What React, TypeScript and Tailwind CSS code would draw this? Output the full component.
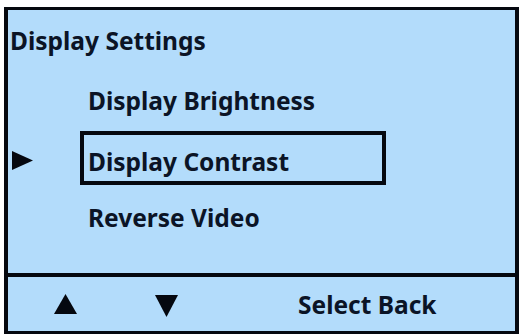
import React from "react";

const font = { fontFamily: "'Noto Sans', Lato, sans-serif" };

const Tri = ({ dir, className }: { dir: "up" | "down" | "right"; className?: string }) => {
  const pts =
    dir === "up" ? "11.5,0 23,20 0,20" : dir === "down" ? "0,0 23,0 11.5,22" : "0,0 21,9.5 0,19";
  const w = dir === "right" ? 21 : 23;
  const h = dir === "down" ? 22 : dir === "up" ? 20 : 19;
  return (
    <svg width={w} height={h} viewBox={`0 0 ${w} ${h}`} className={className}>
      <polygon points={pts} fill="#05080f" />
    </svg>
  );
};

export default function App() {
  return (
    <div className="w-[520px] h-[334px] bg-white pt-[7px] pl-[4px] overflow-hidden" style={font}>
      <div className="w-[515px] h-[327px] bg-[#b3dcfb] border-x-[4px] border-y-[3px] border-[#05080f] flex flex-col text-[#0b1426] font-bold text-[24.5px]">
        {/* menu area */}
        <div className="h-[263px] flex flex-col">
          <div className="mt-[16px] ml-[2px] h-[29px] leading-[29px]">Display Settings</div>
          <div className="mt-[31px] ml-[80px] h-[29px] leading-[29px]">Display Brightness</div>
          <div className="mt-[16px] flex items-center">
            <Tri dir="right" className="ml-[4px] mt-[4px]" />
            <div className="ml-[47px] w-[306px] h-[54px] border-[4px] border-[#05080f] pl-[4px] pt-[6px] flex items-center leading-[29px]">
              Display Contrast
            </div>
          </div>
          <div className="mt-[18px] ml-[80px] h-[29px] leading-[29px]">Reverse Video</div>
        </div>
        <div className="h-[4px] bg-[#05080f]" />
        {/* soft keys */}
        <div className="flex-1 flex items-center">
          <Tri dir="up" className="ml-[46px]" />
          <Tri dir="down" className="ml-[78px] mt-[3px]" />
          <div className="ml-[120px] leading-[29px]">Select Back</div>
        </div>
      </div>
    </div>
  );
}
